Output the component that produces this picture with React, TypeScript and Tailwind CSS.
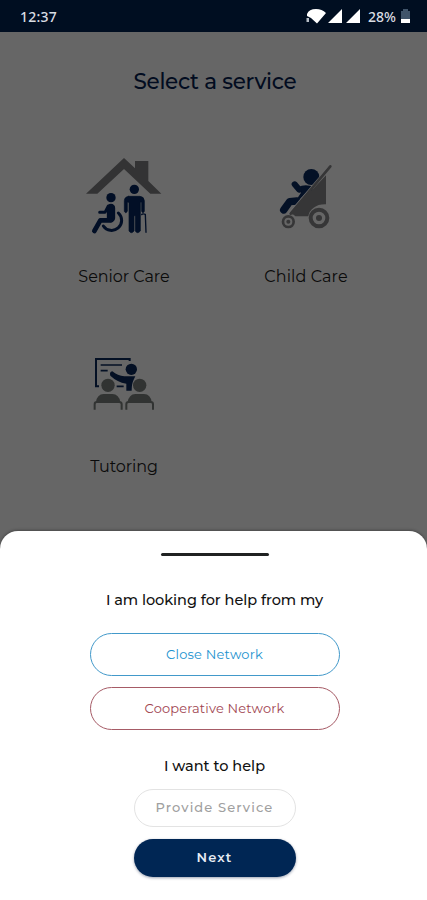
import React from 'react'
import clsx from 'clsx'

const SeniorCareIcon = () => (
  <svg viewBox="-3 0 300 300" className="w-[100px] h-[100px]" fill="none">
    <path d="M33 146 L147 39 L180 70 V48 H220 V108 L259 146 H226 L147 72 L67 146 Z" fill="#333334" />
    {/* wheelchair user */}
    <g stroke="#020f26" strokeLinecap="round" strokeLinejoin="round">
      <circle cx="108" cy="158" r="14" fill="#020f26" stroke="none" />
      <path d="M108 189 V219" strokeWidth="25" />
      <path d="M100 183 L90 202 H74" strokeWidth="9" />
      <path d="M108 226 H76 L58 258" strokeWidth="14" />
      <path d="M130 204 A30 30 0 1 1 85 243" strokeWidth="9" />
    </g>
    {/* standing person with cane */}
    <g stroke="#020f26" strokeLinecap="round" strokeLinejoin="round">
      <circle cx="178" cy="133" r="14" fill="#020f26" stroke="none" />
      <path d="M161 154 H195 Q207 155 208 167 V199 Q204 208 200 199 V172 H196 V258 Q187 268 181 258 V212 H177 V258 Q169 268 162 258 V172 H157 V199 Q152 208 148 199 V167 Q149 155 161 154 Z" fill="#020f26" strokeWidth="2" />
      <path d="M200 209 Q202 205 211 208 L213 262" strokeWidth="4" />
    </g>
  </svg>
)

const ChildCareIcon = () => (
  <svg viewBox="-27 0 300 300" className="w-[100px] h-[100px]" fill="none">
    <circle cx="139" cy="96" r="24" fill="#041126" />
    <path d="M89 118 L103 134 Q116 128 134 131" stroke="#041126" strokeWidth="18" strokeLinecap="round" strokeLinejoin="round" />
    <path d="M109 127 Q121 120 141 128 L101 166 L99 157 L108 143 Z" fill="#041126" />
    <path d="M56 195 L74 170 L96 168" stroke="#041126" strokeWidth="22" strokeLinecap="round" strokeLinejoin="round" />
    <path d="M77 203 L183 91 V178 Q161 177 146 188 Q132 198 130 214 H91 Q88 208 77 207 Z" fill="#363637" />
    <path d="M71 209 L192 67" stroke="#6d6d6e" strokeWidth="8" />
    <path d="M77 206 L196 64" stroke="#363637" strokeWidth="8" strokeLinecap="round" />
    <circle cx="70" cy="230" r="16" stroke="#363637" strokeWidth="8" />
    <circle cx="70" cy="230" r="6" fill="#363637" />
    <circle cx="162" cy="219" r="25" stroke="#363637" strokeWidth="12" />
    <circle cx="162" cy="219" r="9" fill="#363637" />
  </svg>
)

const TutoringIcon = () => (
  <svg viewBox="-18 -30 300 300" className="w-[100px] h-[100px]" fill="none">
    {/* board */}
    <path d="M149 48 V42 H48 V124 H57" stroke="#041024" strokeWidth="6" />
    <path d="M62 60 H126 M62 77 H83 M110 124 H131" stroke="#041024" strokeWidth="5" />
    {/* teacher */}
    <circle cx="154" cy="73" r="17" fill="#041024" />
    <path d="M97 79 Q113 92 133 94 H166 L161 104 Q155 116 155 137 H139 V116 Q111 111 91 92 Q87 81 97 79 Z" fill="#041024" />
    {/* students */}
    <g stroke="#313332" strokeLinecap="butt">
      <circle cx="84" cy="121" r="20" fill="#313332" stroke="none" />
      <circle cx="179" cy="121" r="20" fill="#313332" stroke="none" />
      <path d="M48 171 Q51 148 71 147 H97 Q117 148 121 171 Z" fill="#313332" stroke="none" />
      <path d="M143 171 Q147 148 166 147 H192 Q212 148 215 171 Z" fill="#313332" stroke="none" />
      <path d="M44 194 V178 Q44 171 51 171 H117 Q125 171 125 178 V194" strokeWidth="6" />
      <path d="M139 194 V178 Q139 171 146 171 H212 Q219 171 219 178 V194" strokeWidth="6" />
    </g>
  </svg>
)

const services = [
  { name: 'Senior Care', icon: SeniorCareIcon, tracking: 'tracking-[-0.05px]' },
  { name: 'Child Care', icon: ChildCareIcon, tracking: 'tracking-[0.1px]' },
  { name: 'Tutoring', icon: TutoringIcon, tracking: 'tracking-[-0.1px]' },
]

const StatusBar = () => (
  <header className="flex h-8 shrink-0 items-center justify-between bg-[#000e21] pl-5 pr-[17px] text-[#d9dde3] font-['Noto_Sans',sans-serif]">
    <span className="text-[14px] font-medium tracking-[0.2px]">12:37</span>
    <div className="flex items-center">
      <svg width="56" height="16" viewBox="0 0 56 16" fill="#ffffff">
        <path d="M1 6 Q3 1 10 1 Q16 1 20 5 L11 15.5 L5 10 L1 8 Z" />
        <path d="M0.5 10 H3 V14 H0.5 Z" fill="#b7bec7" />
        <path d="M36 1 V15 H22 Z M54 1 V15 H40 Z" />
      </svg>
      <span className="ml-[6px] text-[14px] font-medium tracking-[0px]">28%</span>
      <svg width="9" height="15" viewBox="0 0 9 15" className="ml-[5px]">
        <path d="M2 0 H7 V2 H9 V10 H0 V2 H2 Z" fill="#40546a" />
        <path d="M0 10 H9 V14 H0 Z" fill="#ffffff" />
      </svg>
    </div>
  </header>
)

export default function App() {
  return (
    <div className="flex h-[900px] w-[427px] flex-col overflow-hidden bg-[#666666] font-['Montserrat','Inter',sans-serif]">
      <StatusBar />

      {/* Services */}
      <main className="h-[499px] shrink-0">
        <h1 className="pt-[34px] text-center text-[21.5px] font-medium leading-[30px] tracking-[-0.3px] text-[#020c20] pl-[3px]">
          Select a service
        </h1>
        <div className="mt-[49px] grid grid-cols-[182px_182px] pl-[33px]">
          {services.map(({ name, icon: Icon, tracking }) => (
            <div key={name} className="flex h-[190px] flex-col items-center">
              <Icon />
              <span className={clsx('mt-[20px] text-[16px] leading-6 text-[#0a0a0a]', tracking)}>{name}</span>
            </div>
          ))}
        </div>
      </main>

      {/* Bottom sheet */}
      <section className="flex flex-1 flex-col items-center rounded-t-[18px] bg-white pl-[2px] shadow-[0_-1px_3px_rgba(0,0,0,0.3)]">
        <div className="mt-[22px] h-[3px] w-[108px] rounded-full bg-[#202222]" />
        <h2 className="mt-[34px] text-[14.5px] font-medium leading-5 tracking-[-0.05px] text-[#111111]">I am looking for help from my</h2>
        <button className="mt-[23px] h-[43px] w-[250px] rounded-full border border-[#4299ca] text-[13px] tracking-[0.2px] text-[#2292cf]">
          Close Network
        </button>
        <button className="mt-[11px] h-[43px] w-[250px] rounded-full border border-[#a65b66] text-[13px] tracking-[0.15px] text-[#a04450]">
          Cooperative Network
        </button>
        <h2 className="mt-[26px] text-[14.5px] font-medium leading-5 text-[#111111]">I want to help</h2>
        <button className="mt-[13px] h-[38px] w-[162px] rounded-full border border-[#e3e3e3] text-[13px] font-medium tracking-[1.1px] text-[#a0a0a0]">
          Provide Service
        </button>
        <button className="mt-[12px] h-[38px] w-[162px] rounded-full bg-[#002654] text-[13px] font-semibold tracking-[1.1px] text-[#e8edf4] shadow-[0_1px_3px_rgba(0,20,60,0.4)]">
          Next
        </button>
      </section>
    </div>
  )
}
